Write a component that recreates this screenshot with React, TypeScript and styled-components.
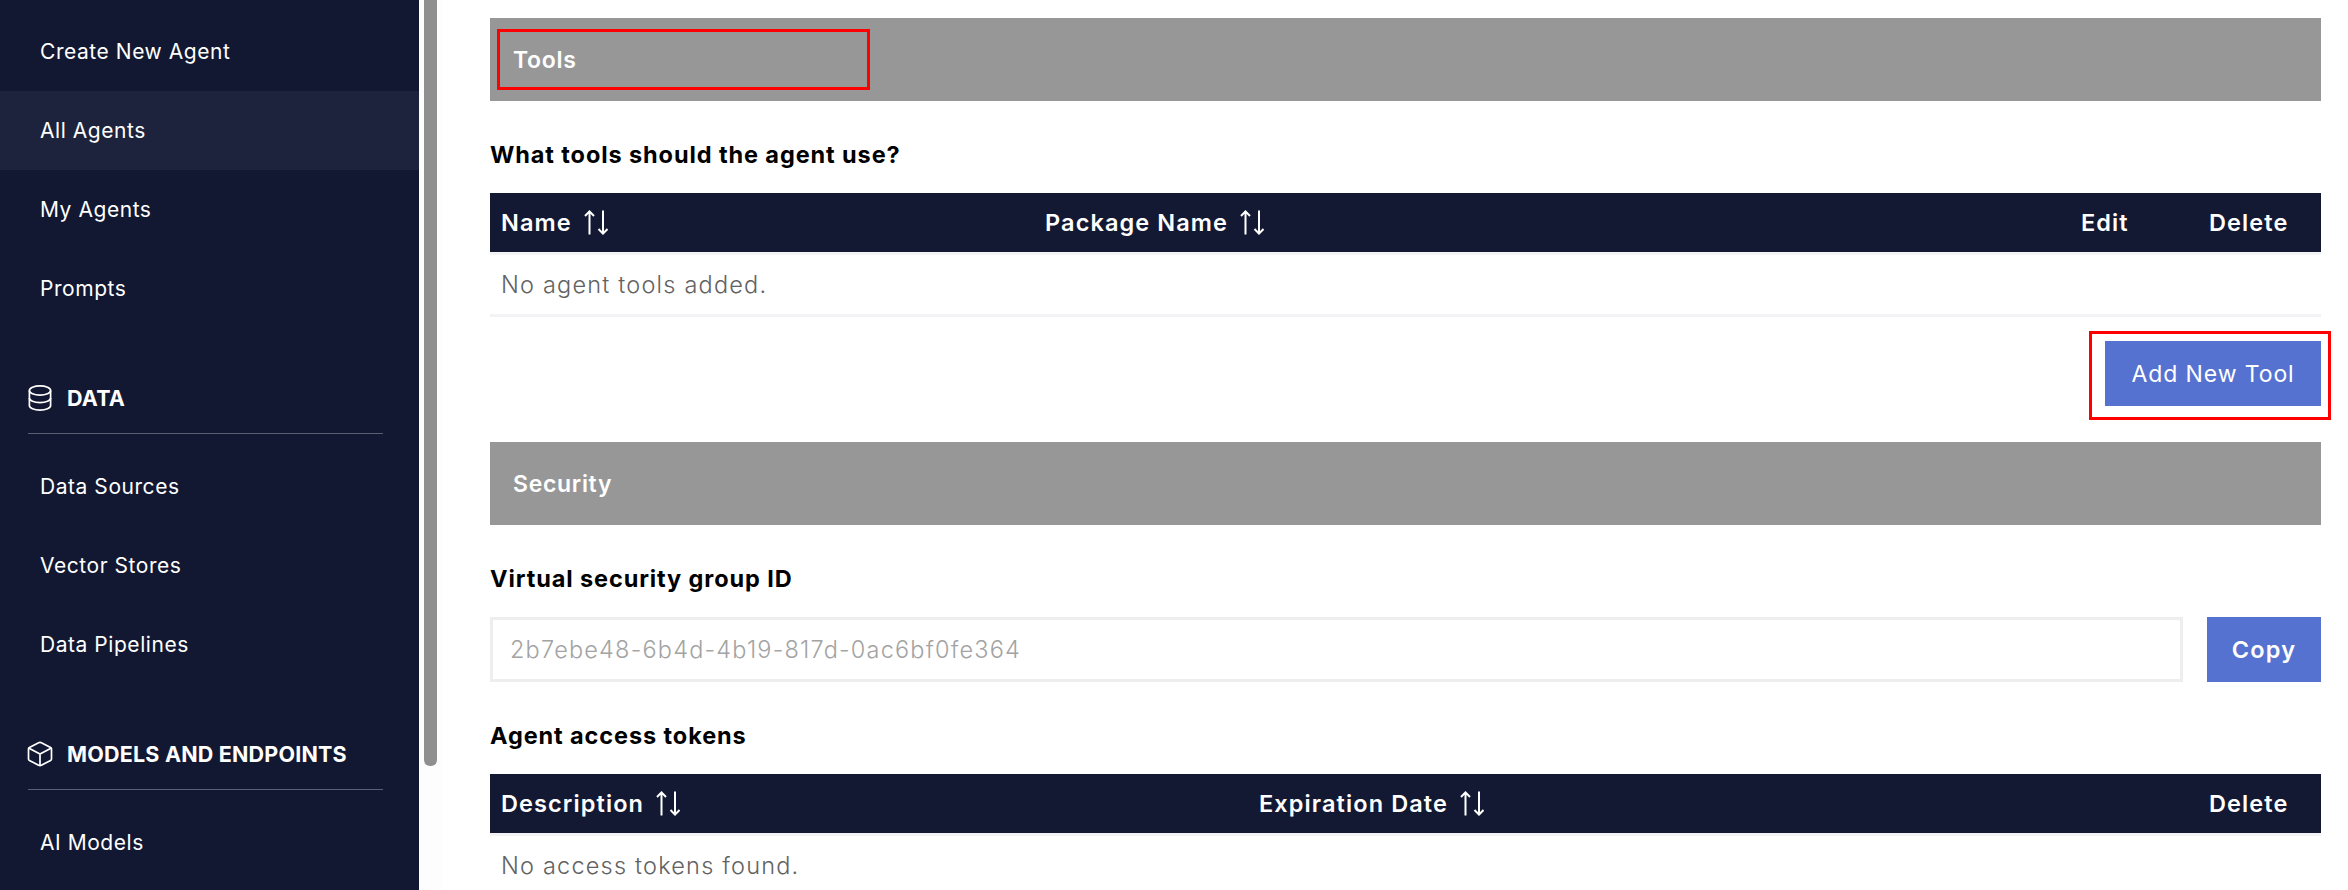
import React from "react";
import styled, { createGlobalStyle } from "styled-components";

const GlobalStyle = createGlobalStyle`
  html, body {
    margin: 0;
    padding: 0;
    background: #ffffff;
    font-family: Inter, "Open Sans", sans-serif;
  }
  *, *::before, *::after {
    box-sizing: border-box;
  }
`;

const Page = styled.div`
  display: flex;
  width: 2348px;
  height: 890px;
  overflow: hidden;
`;

const Sidebar = styled.nav`
  flex: 0 0 419px;
  padding-top: 12px;
  background: #121831;
  color: #ffffff;
`;

const NavItem = styled.div<{ active?: boolean }>`
  display: flex;
  align-items: center;
  height: 79px;
  padding-left: 40px;
  font-size: 21px;
  font-weight: 400;
  letter-spacing: 0.55px;
  background: ${(props) => (props.active ? "#1d233c" : "transparent")};
`;

const NavGroup = styled.div`
  display: flex;
  align-items: center;
  gap: 15px;
  height: 54px;
  margin: 52px 36px 13px 28px;
  padding-bottom: 17px;
  border-bottom: 1px solid #5a5f73;
  font-size: 21.5px;
  font-weight: 700;
  letter-spacing: 0.2px;
`;

const BoxGlyph = styled.svg`
  margin: 0 -1px;
`;

const ScrollTrack = styled.div`
  flex: 0 0 23px;
  padding: 0 5px;
  background: #fdfdfd;
`;

const ScrollThumb = styled.div`
  width: 13px;
  height: 766px;
  background: #8f8f8f;
  border-radius: 0 0 6px 6px;
`;

const Main = styled.main`
  flex: 1;
  padding: 18px 27px 0 48px;
  min-width: 0;
`;

const SectionBar = styled.div<{ boxed?: boolean }>`
  position: relative;
  display: flex;
  align-items: center;
  height: 83px;
  padding-left: 23px;
  background: #979797;
  color: #ffffff;
  font-size: 23px;
  font-weight: 600;
  letter-spacing: 0.7px;

  ${(props) =>
    props.boxed &&
    `&::after {
      content: "";
      position: absolute;
      top: 11px;
      left: 7px;
      width: 373px;
      height: 61px;
      border: 3px solid #ff0000;
    }`}
`;

const FieldLabel = styled.div<{ top: number }>`
  height: 30px;
  margin: ${(props) => props.top}px 0 23px;
  color: #000000;
  font-size: 23.5px;
  font-weight: 700;
  letter-spacing: 0.9px;
  line-height: 30px;
`;

const TableHead = styled.div<{ columns: string }>`
  display: grid;
  grid-template-columns: ${(props) => props.columns};
  align-items: center;
  height: 62px;
  border-bottom: 3px solid #f3f3f5;
  background: #131933;
  background-clip: padding-box;
  color: #ffffff;
  font-size: 23.5px;
  font-weight: 600;
  letter-spacing: 1.1px;
`;

const HeadCell = styled.div`
  display: flex;
  align-items: center;
  gap: 12px;
  padding-left: 11px;
`;

const EmptyRow = styled.div`
  display: flex;
  align-items: center;
  height: 62px;
  padding-left: 11px;
  border-bottom: 3px solid #f3f3f5;
  color: #626262;
  font-size: 23.5px;
  font-weight: 300;
  letter-spacing: 1.2px;
`;

const ButtonRow = styled.div`
  display: flex;
  justify-content: flex-end;
  margin: 24px 0 36px;
`;

const AddButton = styled.button`
  position: relative;
  width: 216px;
  height: 65px;
  border: 0;
  background: #5672d0;
  color: #ffffff;
  font-family: inherit;
  font-size: 23px;
  font-weight: 400;
  letter-spacing: 0.9px;

  &::after {
    content: "";
    position: absolute;
    top: -10px;
    right: -10px;
    bottom: -14px;
    left: -16px;
    border: 3px solid #ff0000;
  }
`;

const CopyRow = styled.div`
  display: flex;
  gap: 24px;
  height: 65px;
`;

const IdInput = styled.input`
  flex: 1;
  padding: 0 17px;
  border: 3px solid #eeeeee;
  outline: none;
  background: #ffffff;
  font-family: inherit;
  font-size: 23.5px;
  font-weight: 300;
  letter-spacing: 1.2px;

  &::placeholder {
    color: #a3a3a3;
    opacity: 1;
  }
`;

const CopyButton = styled.button`
  flex: 0 0 114px;
  border: 0;
  background: #5672d0;
  color: #ffffff;
  font-family: inherit;
  font-size: 23.5px;
  font-weight: 600;
  letter-spacing: 1.2px;
`;

const DatabaseIcon = () => (
  <svg width="24" height="26" viewBox="0 0 24 26" fill="none" stroke="#ffffff" strokeWidth="1.7">
    <ellipse cx="12" cy="5.5" rx="10.6" ry="4.6" />
    <path d="M1.4 5.5v15c0 2.5 4.7 4.6 10.6 4.6s10.6-2.1 10.6-4.6v-15" />
    <path d="M1.4 13c0 2.5 4.7 4.6 10.6 4.6s10.6-2.1 10.6-4.6" />
  </svg>
);

const BoxIcon = () => (
  <BoxGlyph
    width="26"
    height="26"
    viewBox="0 0 26 26"
    fill="none"
    stroke="#ffffff"
    strokeWidth="1.7"
    strokeLinejoin="round"
  >
    <path d="M11.6 1.8 2.4 6.6a1.6 1.6 0 0 0-.9 1.4v10a1.6 1.6 0 0 0 .9 1.4l9.2 4.8a3 3 0 0 0 2.8 0l9.2-4.8a1.6 1.6 0 0 0 .9-1.4V8a1.6 1.6 0 0 0-.9-1.4l-9.2-4.8a3 3 0 0 0-2.8 0Z" />
    <path d="M2 7.2 13 13l11-5.8M13 13v12" />
  </BoxGlyph>
);

const SortArrows = () => (
  <svg width="24" height="25" viewBox="0 0 24 25" fill="none" stroke="#ffffff" strokeWidth="2">
    <path d="M5.5 24.5V1.5M1 6l4.5-4.6L10 6" />
    <path d="M19 .5v23M14.5 19l4.5 4.6 4.5-4.6" />
  </svg>
);

const TOOL_COLUMNS = "544px 1fr 128px 123px";
const TOKEN_COLUMNS = "758px 1fr 123px";

const App: React.FC = () => (
  <Page>
    <GlobalStyle />
    <Sidebar>
      <NavItem>Create New Agent</NavItem>
      <NavItem active>All Agents</NavItem>
      <NavItem>My Agents</NavItem>
      <NavItem>Prompts</NavItem>
      <NavGroup>
        <DatabaseIcon />
        DATA
      </NavGroup>
      <NavItem>Data Sources</NavItem>
      <NavItem>Vector Stores</NavItem>
      <NavItem>Data Pipelines</NavItem>
      <NavGroup>
        <BoxIcon />
        MODELS AND ENDPOINTS
      </NavGroup>
      <NavItem>AI Models</NavItem>
    </Sidebar>
    <ScrollTrack>
      <ScrollThumb />
    </ScrollTrack>
    <Main>
      <SectionBar boxed>Tools</SectionBar>
      <FieldLabel top={39}>What tools should the agent use?</FieldLabel>
      <TableHead columns={TOOL_COLUMNS}>
        <HeadCell>
          Name <SortArrows />
        </HeadCell>
        <HeadCell>
          Package Name <SortArrows />
        </HeadCell>
        <HeadCell>Edit</HeadCell>
        <HeadCell>Delete</HeadCell>
      </TableHead>
      <EmptyRow>No agent tools added.</EmptyRow>
      <ButtonRow>
        <AddButton>Add New Tool</AddButton>
      </ButtonRow>
      <SectionBar>Security</SectionBar>
      <FieldLabel top={39}>Virtual security group ID</FieldLabel>
      <CopyRow>
        <IdInput readOnly placeholder="2b7ebe48-6b4d-4b19-817d-0ac6bf0fe364" />
        <CopyButton>Copy</CopyButton>
      </CopyRow>
      <FieldLabel top={39}>Agent access tokens</FieldLabel>
      <TableHead columns={TOKEN_COLUMNS}>
        <HeadCell>
          Description <SortArrows />
        </HeadCell>
        <HeadCell>
          Expiration Date <SortArrows />
        </HeadCell>
        <HeadCell>Delete</HeadCell>
      </TableHead>
      <EmptyRow>No access tokens found.</EmptyRow>
    </Main>
  </Page>
);

export default App;
